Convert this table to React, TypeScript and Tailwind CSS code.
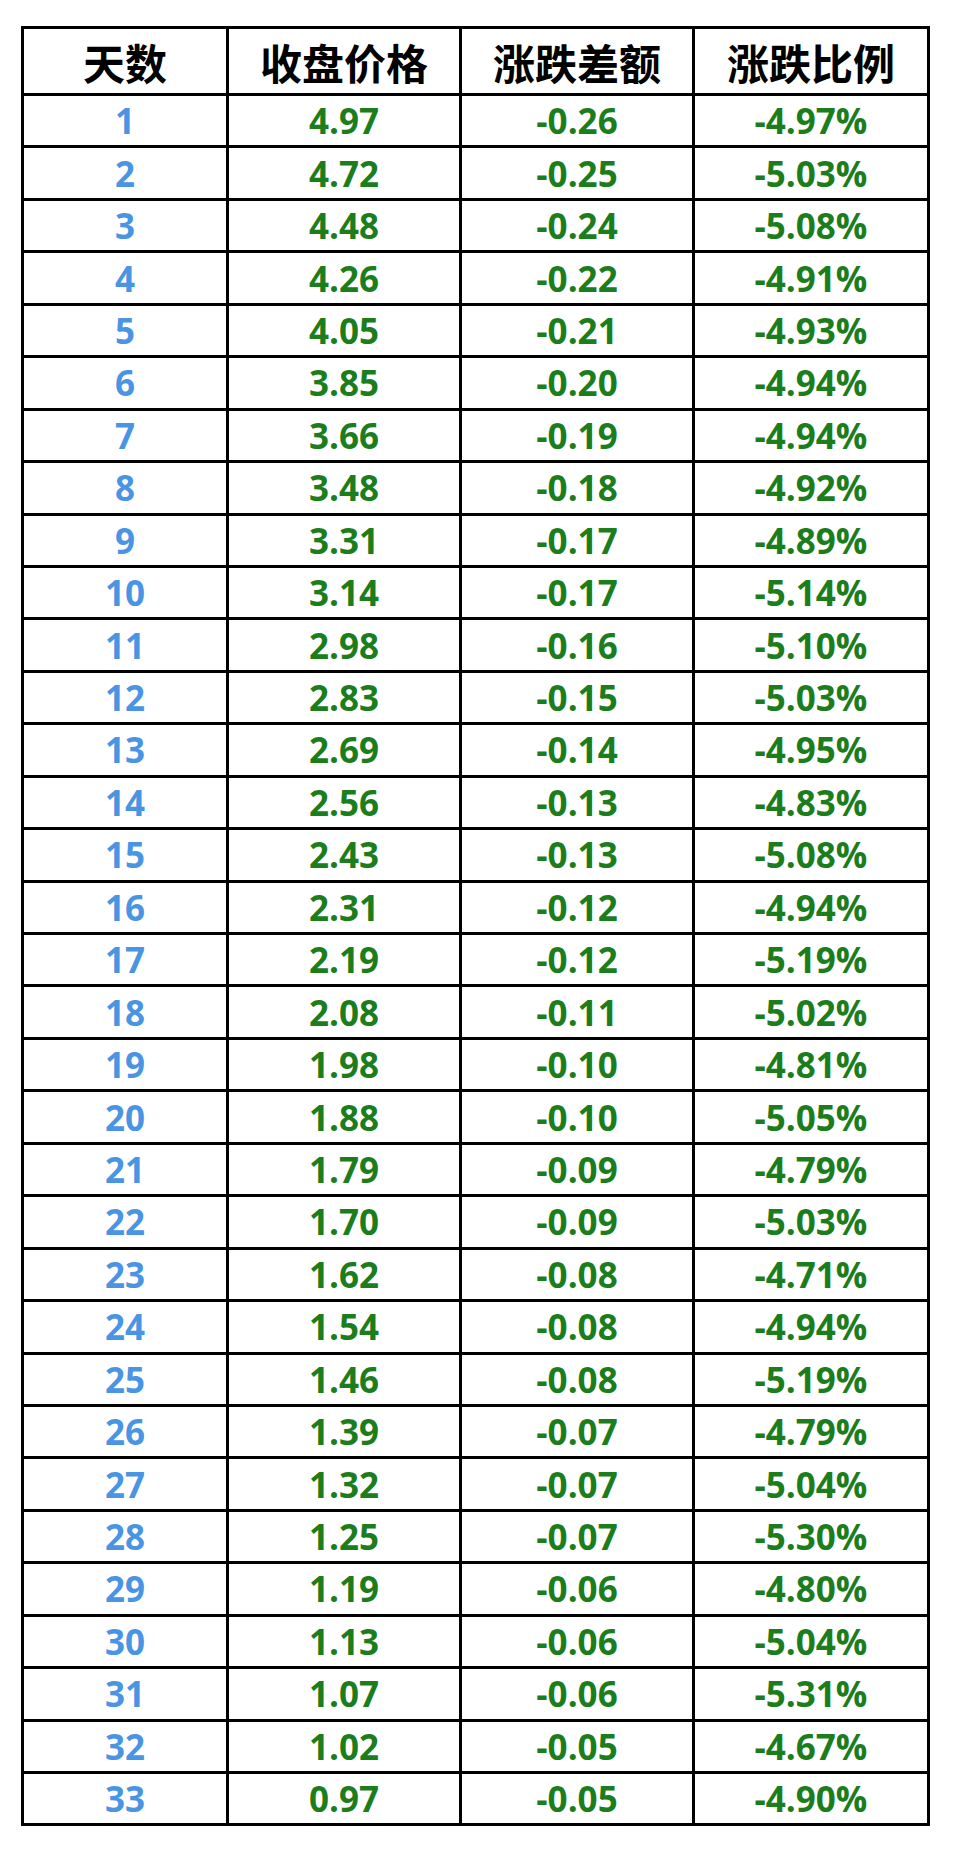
const rows: [number, string, string, string][] = [
  [1, "4.97", "-0.26", "-4.97%"],
  [2, "4.72", "-0.25", "-5.03%"],
  [3, "4.48", "-0.24", "-5.08%"],
  [4, "4.26", "-0.22", "-4.91%"],
  [5, "4.05", "-0.21", "-4.93%"],
  [6, "3.85", "-0.20", "-4.94%"],
  [7, "3.66", "-0.19", "-4.94%"],
  [8, "3.48", "-0.18", "-4.92%"],
  [9, "3.31", "-0.17", "-4.89%"],
  [10, "3.14", "-0.17", "-5.14%"],
  [11, "2.98", "-0.16", "-5.10%"],
  [12, "2.83", "-0.15", "-5.03%"],
  [13, "2.69", "-0.14", "-4.95%"],
  [14, "2.56", "-0.13", "-4.83%"],
  [15, "2.43", "-0.13", "-5.08%"],
  [16, "2.31", "-0.12", "-4.94%"],
  [17, "2.19", "-0.12", "-5.19%"],
  [18, "2.08", "-0.11", "-5.02%"],
  [19, "1.98", "-0.10", "-4.81%"],
  [20, "1.88", "-0.10", "-5.05%"],
  [21, "1.79", "-0.09", "-4.79%"],
  [22, "1.70", "-0.09", "-5.03%"],
  [23, "1.62", "-0.08", "-4.71%"],
  [24, "1.54", "-0.08", "-4.94%"],
  [25, "1.46", "-0.08", "-5.19%"],
  [26, "1.39", "-0.07", "-4.79%"],
  [27, "1.32", "-0.07", "-5.04%"],
  [28, "1.25", "-0.07", "-5.30%"],
  [29, "1.19", "-0.06", "-4.80%"],
  [30, "1.13", "-0.06", "-5.04%"],
  [31, "1.07", "-0.06", "-5.31%"],
  [32, "1.02", "-0.05", "-4.67%"],
  [33, "0.97", "-0.05", "-4.90%"],
];

const headers = ["天数", "收盘价格", "涨跌差额", "涨跌比例"];

function App() {
  return (
    <div className="w-[957px] h-[1858px] bg-white pt-[26px] pl-[21px]">
      <div className="w-[909px] border-[3px] border-black">
        {/* header */}
        <div className="grid grid-cols-[202px_233px_233px_235px] h-[64px]">
          {headers.map((h, i) => (
            <div
              key={h}
              className={`flex items-center justify-center text-[42px] font-bold text-black font-['Noto_Sans_CJK_SC',sans-serif] ${
                i > 0 ? "border-l-[3px] border-black" : ""
              }`}
            >
              {h}
            </div>
          ))}
        </div>
        {rows.map(([day, price, diff, pct]) => (
          <div
            key={day}
            className="grid grid-cols-[202px_233px_233px_235px] h-[52.45px] border-t-[3px] border-black text-[35px] font-bold font-['Open_Sans',sans-serif] leading-none"
          >
            <div className="flex items-center justify-center text-[#4a94e4]">{day}</div>
            <div className="flex items-center justify-center border-l-[3px] border-black text-[#1b7d1b]">{price}</div>
            <div className="flex items-center justify-center border-l-[3px] border-black text-[#1b7d1b]">{diff}</div>
            <div className="flex items-center justify-center border-l-[3px] border-black text-[#1b7d1b]">{pct}</div>
          </div>
        ))}
      </div>
    </div>
  );
}

export default App;
